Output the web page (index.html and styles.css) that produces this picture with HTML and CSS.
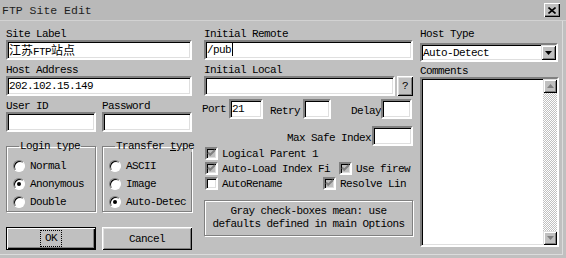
FILE: index.html
```html
<!DOCTYPE html>
<html lang="en">
<head>
    <meta charset="UTF-8">
    <title>FTP Site Edit</title>
    <link rel="stylesheet" href="styles.css">
</head>
<body>
    <div class="window">
        <div class="titlebar">
            <span class="title">FTP Site Edit</span>
            <span class="close">
                <svg width="8" height="7" viewBox="0 0 8 7"><path d="M0.5 0.5 L7.5 6.5 M7.5 0.5 L0.5 6.5" stroke="#000" stroke-width="1.6"/></svg>
            </span>
        </div>

        <div class="content">
            <div class="col left">
                <div class="field">
                    <div class="label">Site Label</div>
                    <div class="edit"><span class="cjk">江苏</span>FTP<span class="cjk">站点</span></div>
                </div>
                <div class="field">
                    <div class="label">Host Address</div>
                    <div class="edit">202.102.15.149</div>
                </div>
                <div class="pair">
                    <div class="field half">
                        <div class="label">User ID</div>
                        <div class="edit"></div>
                    </div>
                    <div class="field half">
                        <div class="label">Password</div>
                        <div class="edit"></div>
                    </div>
                </div>

                <div class="pair groups">
                    <fieldset class="group">
                        <legend>Login type</legend>
                        <div class="radio-row"><span class="radio"></span>Normal</div>
                        <div class="radio-row"><span class="radio on"></span>Anonymous</div>
                        <div class="radio-row"><span class="radio"></span>Double</div>
                    </fieldset>
                    <fieldset class="group">
                        <legend>Transfer <u>t</u>ype</legend>
                        <div class="radio-row"><span class="radio"></span>ASCII</div>
                        <div class="radio-row"><span class="radio"></span>Image</div>
                        <div class="radio-row"><span class="radio on"></span>Auto-Detec</div>
                    </fieldset>
                </div>

                <div class="pair buttons">
                    <div class="button default"><span class="focus">OK</span></div>
                    <div class="button">Cancel</div>
                </div>
            </div>

            <div class="col mid">
                <div class="field">
                    <div class="label">Initial Remote</div>
                    <div class="edit">/pub<span class="caret"></span></div>
                </div>
                <div class="field local">
                    <div class="label">Initial Local</div>
                    <div class="local-row">
                        <div class="edit wide"></div>
                        <div class="button small">?</div>
                    </div>
                </div>

                <div class="num-row">
                    <span class="num-label port">Port</span>
                    <div class="edit port-in">21</div>
                    <span class="num-label retry">Retry</span>
                    <div class="edit retry-in"></div>
                    <span class="num-label delay">Delay</span>
                    <div class="edit delay-in"></div>
                </div>
                <div class="num-row safe">
                    <span class="num-label">Max Safe Index</span>
                    <div class="edit safe-in"></div>
                </div>

                <div class="check-row">
                    <div class="check"><span class="box gray"><svg width="9" height="9" viewBox="0 0 9 9"><path d="M1 3.5 L3.2 5.8 L8 1" stroke="#808080" stroke-width="2" fill="none"/></svg></span><span class="text">Logical Parent 1</span></div>
                </div>
                <div class="check-row">
                    <div class="check first"><span class="box gray"><svg width="9" height="9" viewBox="0 0 9 9"><path d="M1 3.5 L3.2 5.8 L8 1" stroke="#808080" stroke-width="2" fill="none"/></svg></span><span class="text">Auto-Load Index Fi</span></div>
                    <div class="check rest"><span class="box gray"><svg width="9" height="9" viewBox="0 0 9 9"><path d="M1 3.5 L3.2 5.8 L8 1" stroke="#808080" stroke-width="2" fill="none"/></svg></span><span class="text">Use firew</span></div>
                </div>
                <div class="check-row">
                    <div class="check second"><span class="box"></span><span class="text">AutoRename</span></div>
                    <div class="check rest"><span class="box gray"><svg width="9" height="9" viewBox="0 0 9 9"><path d="M1 3.5 L3.2 5.8 L8 1" stroke="#808080" stroke-width="2" fill="none"/></svg></span><span class="text">Resolve Lin</span></div>
                </div>

                <div class="note">
                    Gray check-boxes mean: use<br>
                    defaults defined in main Options
                </div>
            </div>

            <div class="col right">
                <div class="label">Host Type</div>
                <div class="edit select">
                    <span>Auto-Detect</span>
                    <span class="drop"><svg width="7" height="4" viewBox="0 0 7 4"><path d="M0 0 H7 L3.5 4 Z" fill="#000"/></svg></span>
                </div>
                <div class="label comments">Comments</div>
                <div class="edit memo">
                    <div class="scrollbar">
                        <span class="arrow"><svg width="7" height="4" viewBox="0 0 7 4"><path d="M0 4 H7 L3.5 0 Z" fill="#808080"/></svg></span>
                        <span class="track"></span>
                        <span class="arrow"><svg width="7" height="4" viewBox="0 0 7 4"><path d="M0 0 H7 L3.5 4 Z" fill="#808080"/></svg></span>
                    </div>
                </div>
            </div>
        </div>
    </div>
</body>
</html>
```

FILE: styles.css
```css
* { box-sizing: border-box; }

body {
    margin: 0;
    background-color: #c0c0c0;
    color: #000;
    font-family: "Liberation Mono", "DejaVu Sans Mono", monospace;
    font-size: 11px;
    letter-spacing: -0.6px;
}

.window {
    width: 566px;
    height: 258px;
    background-color: #c0c0c0;
    box-shadow: inset -3px -3px 0 #c0c0c0, inset -4px -4px 0 #dcdcdc;
    overflow: hidden;
}

.titlebar {
    height: 21px;
    display: flex;
    align-items: center;
    padding-left: 2px;
    background-color: #b9b9b9;
    border-bottom: 1px solid #d2d2d2;
}

.title {
    font-size: 11.5px;
    letter-spacing: 0;
    color: #1e1e1e;
}

.close {
    margin-left: auto;
    margin-right: 6px;
    width: 16px;
    height: 14px;
    display: flex;
    align-items: center;
    justify-content: center;
    background-color: #c0c0c0;
    box-shadow: inset 1px 1px #fff, inset -1px -1px #000, inset -2px -2px #808080;
}

.content {
    display: flex;
    padding: 7px 0 0 6px;
}

.col { display: flex; flex-direction: column; }
.left { width: 186px; }
.mid { width: 209px; margin-left: 12px; }
.right { width: 139px; margin-left: 7px; }

.label {
    height: 12px;
    line-height: 12px;
    white-space: nowrap;
}

.field {
    display: flex;
    flex-direction: column;
    margin-bottom: 4px;
}

.edit {
    height: 20px;
    line-height: 16px;
    padding-left: 1px;
    background-color: #fff;
    border: 2px solid;
    border-color: #808080 #fff #fff #808080;
    box-shadow: inset 1px 1px #000, inset -1px -1px #dfdfdf;
    white-space: nowrap;
    overflow: hidden;
}

.cjk {
    font-family: "Noto Sans CJK SC", sans-serif;
    font-size: 12px;
    letter-spacing: 0;
}

.caret {
    display: inline-block;
    width: 1px;
    height: 13px;
    margin-left: 1px;
    vertical-align: -3px;
    background-color: #000;
}

.pair {
    display: flex;
    gap: 6px;
}

.half { width: 90px; }

.groups { margin-top: 4px; }

.group {
    width: 90px;
    margin: 0;
    padding: 5px 0 0 6px;
    border: 1px solid #808080;
    box-shadow: inset 1px 1px #fff, 1px 1px #fff;
    min-width: 0;
}

.group legend {
    padding: 0 1px;
    margin-left: 6px;
    line-height: 12px;
    white-space: nowrap;
}

.radio-row {
    height: 18px;
    display: flex;
    align-items: center;
    white-space: nowrap;
}

.radio {
    flex: none;
    width: 12px;
    height: 12px;
    margin-right: 5px;
    border-radius: 50%;
    background-color: #fff;
    border: 1px solid;
    border-color: #808080 #fff #fff #808080;
    box-shadow: inset 1px 1px #000;
    display: flex;
    align-items: center;
    justify-content: center;
}

.radio.on::after {
    content: "";
    width: 4px;
    height: 4px;
    border-radius: 50%;
    background-color: #000;
}

.buttons { margin-top: 15px; }

.button {
    width: 90px;
    height: 23px;
    display: flex;
    align-items: center;
    justify-content: center;
    background-color: #c0c0c0;
    box-shadow: inset 1px 1px #fff, inset -1px -1px #000, inset 2px 2px #dfdfdf, inset -2px -2px #808080;
}

.button.default {
    border: 1px solid #000;
    box-shadow: inset 1px 1px #fff, inset -1px -1px #000, inset -2px -2px #808080;
}

.focus {
    outline: 1px dotted #000;
    padding: 1px 4px;
    line-height: 13px;
}

.local { margin-bottom: 3px; }

.local-row { display: flex; }

.wide { width: 191px; }

.button.small {
    width: 16px;
    height: 20px;
    margin-left: 2px;
}

.num-row {
    display: flex;
    align-items: flex-end;
    height: 20px;
    margin-left: -2px;
    white-space: nowrap;
}

.num-label { padding-bottom: 2px; }
.num-label.port { width: 27px; padding-bottom: 4px; }
.num-label.retry { width: 33px; margin-left: 7px; }
.num-label.delay { width: 30px; margin-left: 20px; }

.port-in { width: 34px; }
.retry-in { width: 28px; }
.delay-in { width: 31px; }

.num-row.safe {
    margin-top: 7px;
    justify-content: flex-end;
    margin-left: 0;
}

.safe-in { width: 41px; margin-left: 1px; }

.check-row {
    height: 15px;
    display: flex;
    align-items: center;
    margin-left: 1px;
    white-space: nowrap;
}

.check {
    display: flex;
    align-items: center;
}

.check.first { width: 134px; }
.check.second { width: 118px; }
.check.rest { flex: 1; }

.box {
    flex: none;
    width: 13px;
    height: 13px;
    margin-right: 4px;
    display: flex;
    align-items: center;
    justify-content: center;
    background-color: #fff;
    border: 2px solid;
    border-color: #808080 #fff #fff #808080;
    box-shadow: inset 1px 1px #000, inset -1px -1px #dfdfdf;
}

.box.gray { background-color: #c0c0c0; }

.note {
    margin-top: 9px;
    height: 36px;
    padding-top: 4px;
    line-height: 13px;
    text-align: center;
    white-space: nowrap;
    border: 1px solid #808080;
    box-shadow: inset 1px 1px #fff, 1px 1px #fff;
}

.select {
    margin-top: 3px;
    height: 19px;
    width: 138px;
    display: flex;
    align-items: center;
    padding-left: 1px;
}

.drop {
    margin-left: auto;
    width: 15px;
    height: 15px;
    display: flex;
    align-items: center;
    justify-content: center;
    background-color: #c0c0c0;
    box-shadow: inset 1px 1px #dfdfdf, inset -1px -1px #000, inset 2px 2px #fff, inset -2px -2px #808080;
}

.label.comments { margin-top: 3px; }

.memo {
    height: 170px;
    display: flex;
    justify-content: flex-end;
    padding: 0;
}

.scrollbar {
    width: 14px;
    display: flex;
    flex-direction: column;
}

.arrow {
    height: 14px;
    display: flex;
    align-items: center;
    justify-content: center;
    background-color: #c0c0c0;
    box-shadow: inset 1px 1px #dfdfdf, inset -1px -1px #000, inset 2px 2px #fff, inset -2px -2px #808080;
}

.track {
    flex: 1;
    background: repeating-conic-gradient(#c0c0c0 0 25%, #fff 0 50%) 0 0 / 2px 2px;
}
```
